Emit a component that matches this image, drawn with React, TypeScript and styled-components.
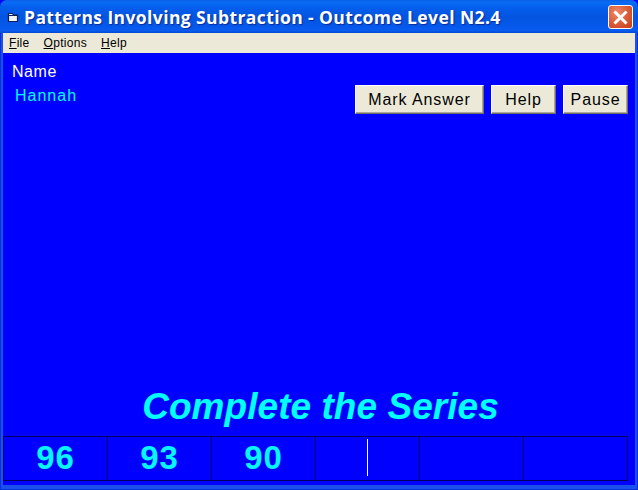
import React from "react";
import styled, { createGlobalStyle } from "styled-components";

const Global = createGlobalStyle`
  html, body { margin: 0; padding: 0; background: #0000ff; }
  #root { width: 638px; height: 490px; overflow: hidden; }
`;

const Win = styled.div`
  width: 638px;
  height: 490px;
  box-sizing: border-box;
  display: flex;
  flex-direction: column;
  background: #1a50ec;
  padding: 0 2px 4px 2px;
  border-radius: 7px 7px 0 0;
  border-left: 1px solid #0831d9;
  border-right: 1px solid #0831d9;
  border-bottom: 1px solid #0831d9;
`;

const TitleBar = styled.div`
  height: 33px;
  margin: 0 -3px;
  padding: 1px 5px 0 7px;
  box-sizing: border-box;
  flex: none;
  display: flex;
  align-items: center;
  border-radius: 7px 7px 0 0;
  background: linear-gradient(180deg, #0a5fe8 0%, #0a6cf5 8%, #0560ee 20%, #0355e0 50%, #0558ea 80%, #0a5cf0 92%, #0349d0 100%);
`;

const TitleText = styled.div`
  margin-left: 5px;
  flex: 1;
  font: bold 17.5px "Open Sans", "DejaVu Sans", sans-serif;
  letter-spacing: 0.4px;
  color: #fff;
  white-space: nowrap;
  text-shadow: 1px 1px 1px #0a2a9a;
`;

const CloseBtn = styled.div`
  width: 25px;
  height: 24px;
  box-sizing: border-box;
  border: 1px solid #fff;
  border-radius: 3px;
  background: radial-gradient(circle at 35% 30%, #ec8c6c 0%, #dc5c38 50%, #c43c1c 100%);
  display: flex;
  align-items: center;
  justify-content: center;
`;

const MenuBar = styled.div`
  height: 20px;
  flex: none;
  display: flex;
  align-items: center;
  padding-left: 6px;
  gap: 14px;
  background: #ece9d8;
  font: 12px "Liberation Sans", Arial, sans-serif;
  letter-spacing: 0.3px;
  color: #000;
`;

const MenuItem = styled.span`
  & u { text-underline-offset: 1px; }
`;

const Content = styled.div`
  flex: 1;
  background: #0000ff;
  display: flex;
  flex-direction: column;
  min-height: 0;
`;

const Top = styled.div`
  display: flex;
  justify-content: space-between;
  align-items: flex-start;
  flex: 1;
  padding: 9px 7px 0 8px;
`;

const NameBlock = styled.div`
  display: flex;
  flex-direction: column;
  gap: 5px;
  font: 16px/19px "Liberation Sans", Arial, sans-serif;
`;

const NameLabel = styled.div`
  color: #fff;
  margin-left: 1px;
  letter-spacing: 0.55px;
`;

const NameValue = styled.div`
  color: #00ffff;
  margin-left: 4px;
  letter-spacing: 1px;
`;

const Buttons = styled.div`
  display: flex;
  gap: 7px;
  margin-top: 23px;
`;

const Btn = styled.div<{ $w: number }>`
  width: ${(p) => p.$w}px;
  height: 29px;
  box-sizing: border-box;
  display: flex;
  align-items: center;
  justify-content: center;
  background: #ece9d8;
  color: #000;
  font: 16px "Liberation Sans", Arial, sans-serif;
  letter-spacing: 0.9px;
  border: 1px solid;
  border-color: #fff #716f64 #716f64 #fff;
  box-shadow: inset -1px -1px 0 #aca899;
`;

const Heading = styled.div`
  flex: none;
  height: 37px;
  text-align: center;
  font: italic bold 37px/37px "Liberation Sans", Arial, sans-serif;
  color: #00ffff;
  padding-left: 3px;
  margin-bottom: 11px;
  letter-spacing: 0.05px;
`;

const Series = styled.div`
  flex: none;
  display: grid;
  grid-template-columns: repeat(6, 104px);
  height: 45px;
  width: 625px;
  box-sizing: border-box;
  border-top: 1px solid #000060;
  border-bottom: 1px solid #000060;
  border-left: 1px solid #000060;
  margin-bottom: 4px;
`;

const Cell = styled.div`
  position: relative;
  height: 43px;
  box-sizing: border-box;
  border-right: 1px solid #000060;
  display: flex;
  align-items: center;
  justify-content: center;
  padding-bottom: 2px;
  font: bold 33px "Liberation Sans", Arial, sans-serif;
  color: #08f4ff;
  letter-spacing: 1px;
`;

const Caret = styled.span`
  position: absolute;
  left: 51px;
  top: 2px;
  width: 1px;
  height: 37px;
  background: #fff;
`;

const FolderIcon = () => (
  <svg width="12" height="11" viewBox="0 0 12 11">
    <path d="M1.5 1.5h4l1 1.5h4v6.5h-9z" fill="#f4f4ee" stroke="#0a1f60" strokeWidth="1.2" />
    <path d="M2 3.5h8" stroke="#0a1f60" strokeWidth="1" />
  </svg>
);

const CloseIcon = () => (
  <svg width="15" height="15" viewBox="0 0 15 15">
    <path d="M2.5 2.5l10 10M12.5 2.5l-10 10" stroke="#fff" strokeWidth="3" strokeLinecap="square" />
  </svg>
);

export default function App() {
  const values = ["96", "93", "90", "", "", ""];
  return (
    <>
      <Global />
      <Win>
        <TitleBar>
          <FolderIcon />
          <TitleText>Patterns Involving Subtraction - Outcome Level N2.4</TitleText>
          <CloseBtn>
            <CloseIcon />
          </CloseBtn>
        </TitleBar>
        <MenuBar>
          <MenuItem><u>F</u>ile</MenuItem>
          <MenuItem><u>O</u>ptions</MenuItem>
          <MenuItem><u>H</u>elp</MenuItem>
        </MenuBar>
        <Content>
          <Top>
            <NameBlock>
              <NameLabel>Name</NameLabel>
              <NameValue>Hannah</NameValue>
            </NameBlock>
            <Buttons>
              <Btn $w={129}>Mark Answer</Btn>
              <Btn $w={65}>Help</Btn>
              <Btn $w={65}>Pause</Btn>
            </Buttons>
          </Top>
          <Heading>Complete the Series</Heading>
          <Series>
            {values.map((v, i) => (
              <Cell key={i}>
                {v}
                {i === 3 && <Caret />}
              </Cell>
            ))}
          </Series>
        </Content>
      </Win>
    </>
  );
}
